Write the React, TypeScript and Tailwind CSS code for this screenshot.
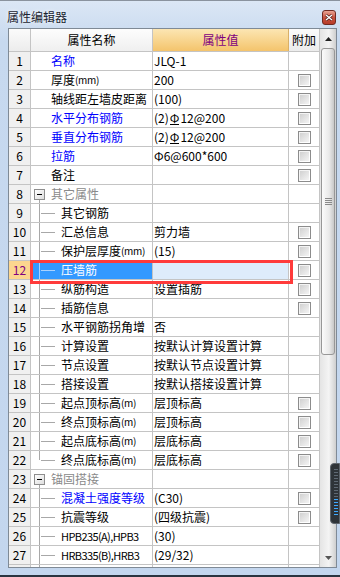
import React from "react";
import clsx from "clsx";

type Row = {
  n: number;
  name: string;
  value?: React.ReactNode;
  color?: "blue" | "gray";
  kind: "top" | "group" | "child";
  check?: boolean;
  sel?: boolean;
  last?: boolean;
};

const Bar = () => (
  <span className="inline-block border-b border-black leading-[12px] mx-[1px]">Φ</span>
);

const rows: Row[] = [
  { n: 1, name: "名称", value: "JLQ-1", color: "blue", kind: "top" },
  { n: 2, name: "厚度(mm)", value: "200", kind: "top", check: true },
  { n: 3, name: "轴线距左墙皮距离", value: "(100)", kind: "top", check: true },
  { n: 4, name: "水平分布钢筋", value: <>(2)<Bar />12@200</>, color: "blue", kind: "top", check: true },
  { n: 5, name: "垂直分布钢筋", value: <>(2)<Bar />12@200</>, color: "blue", kind: "top", check: true },
  { n: 6, name: "拉筋", value: "Φ6@600*600", color: "blue", kind: "top", check: true },
  { n: 7, name: "备注", value: "", kind: "top", check: true },
  { n: 8, name: "其它属性", color: "gray", kind: "group" },
  { n: 9, name: "其它钢筋", kind: "child" },
  { n: 10, name: "汇总信息", value: "剪力墙", kind: "child", check: true },
  { n: 11, name: "保护层厚度(mm)", value: "(15)", kind: "child", check: true },
  { n: 12, name: "压墙筋", value: "", kind: "child", check: true, sel: true },
  { n: 13, name: "纵筋构造", value: "设置插筋", kind: "child", check: true },
  { n: 14, name: "插筋信息", value: "", kind: "child", check: true },
  { n: 15, name: "水平钢筋拐角增", value: "否", kind: "child" },
  { n: 16, name: "计算设置", value: "按默认计算设置计算", kind: "child" },
  { n: 17, name: "节点设置", value: "按默认节点设置计算", kind: "child" },
  { n: 18, name: "搭接设置", value: "按默认搭接设置计算", kind: "child" },
  { n: 19, name: "起点顶标高(m)", value: "层顶标高", kind: "child", check: true },
  { n: 20, name: "终点顶标高(m)", value: "层顶标高", kind: "child", check: true },
  { n: 21, name: "起点底标高(m)", value: "层底标高", kind: "child", check: true },
  { n: 22, name: "终点底标高(m)", value: "层底标高", kind: "child", check: true, last: true },
  { n: 23, name: "锚固搭接", color: "gray", kind: "group" },
  { n: 24, name: "混凝土强度等级", value: "(C30)", color: "blue", kind: "child", check: true },
  { n: 25, name: "抗震等级", value: "(四级抗震)", kind: "child", check: true },
  { n: 26, name: "HPB235(A),HPB3", value: "(30)", kind: "child" },
  { n: 27, name: "HRB335(B),HRB3", value: "(29/32)", kind: "child" },
];

// unit suffixes and latin names are drawn narrower, like the bitmap font in the original
function Label({ text }: { text: string }) {
  const unit = text.match(/^(.*)(\(m+\))$/);
  if (unit)
    return (
      <>
        {unit[1]}
        <span className="text-[10px] tracking-[-0.3px]">{unit[2]}</span>
      </>
    );
  if (/^[A-Z]/.test(text)) return <span className="text-[11px] tracking-[-0.6px]">{text}</span>;
  return <>{text}</>;
}

function Check() {
  return (
    <div className="w-[13px] h-[13px] border border-[#8c8c8c] bg-[linear-gradient(135deg,#cdcdcd,#f8f8f8)] shadow-[inset_1px_1px_0_#f4f4f4,inset_-1px_-1px_0_#ffffff]" />
  );
}

function NameCell({ r }: { r: Row }) {
  const line = r.sel ? "bg-[#a9d2ff]" : "bg-[#a8a8a8]";
  return (
    <div
      className={clsx(
        "relative w-[122px] shrink-0 border-r border-[#c4c4c4] flex items-center overflow-hidden whitespace-nowrap",
        r.sel && "bg-[#3399ff] text-white",
        r.kind === "top" || r.kind === "group" ? "pl-[20px]" : "pl-[30px]",
        !r.sel && r.color === "blue" && "text-[#0000ff]",
        !r.sel && r.color === "gray" && "text-[#8a8a8a]"
      )}
    >
      {r.kind === "child" && (
        <>
          <div className={clsx("absolute left-[8px] top-0 w-px", line, r.last ? "h-[9px]" : "h-full")} />
          <div className={clsx("absolute left-[10px] top-[9px] h-px w-[14px]", line)} />
        </>
      )}
      {r.kind === "group" && (
        <>
          <div className="absolute left-[3px] top-[4px] w-[11px] h-[11px] border border-[#8e8e8e] bg-[linear-gradient(135deg,#ffffff,#dedede)] flex items-center justify-center">
            <div className="w-[5px] h-px bg-black" />
          </div>
          <div className={clsx("absolute left-[8px] top-[15px] w-px h-[4px]", line)} />
        </>
      )}
      <Label text={r.name} />
    </div>
  );
}

function TableRow({ r }: { r: Row }) {
  return (
    <div className="flex h-[19px] shrink-0 border-b border-[#c4c4c4]">
      <div
        className={clsx(
          "w-[22px] shrink-0 border-r border-[#c4c4c4] flex items-center justify-center",
          r.sel ? "bg-[#fcd68f] text-[#800080]" : "bg-[#f0f0f0]"
        )}
      >
        {r.n}
      </div>
      <NameCell r={r} />
      <div
        className={clsx(
          "w-[136px] shrink-0 border-r border-[#c4c4c4] flex items-center pl-[1px] whitespace-nowrap overflow-hidden",
          r.sel && "bg-[#deecfb]"
        )}
      >
        {r.value}
      </div>
      <div className="w-[30px] shrink-0 flex items-center justify-center">{r.check && <Check />}</div>
    </div>
  );
}

function Scrollbar() {
  return (
    <div className="w-[17px] shrink-0 flex flex-col border-l border-[#c4c4c4] bg-[linear-gradient(to_right,#e4e4e4,#f4f4f4_55%,#cfcfcf)]">
      <div className="h-[19px] shrink-0 flex items-center justify-center">
        <svg width="7" height="4" viewBox="0 0 7 4">
          <path d="M0 4 L3.5 0 L7 4 Z" fill="#222" />
        </svg>
      </div>
      <div className="flex-1 flex flex-col">
        <div className="h-[307px] mx-[1px] rounded-[3px] border border-[#979797] bg-[linear-gradient(to_right,#fbfbfb,#e9e9e9_60%,#c8c8c8)] flex flex-col items-center justify-center gap-[1px]">
          <div className="w-[7px] h-px bg-[#8a8a8a]" />
          <div className="w-[7px] h-px bg-[#8a8a8a]" />
          <div className="w-[7px] h-px bg-[#8a8a8a]" />
          <div className="w-[7px] h-px bg-[#8a8a8a]" />
        </div>
      </div>
      <div className="h-[19px] shrink-0 flex items-center justify-center">
        <svg width="7" height="4" viewBox="0 0 7 4">
          <path d="M0 0 L3.5 4 L7 0 Z" fill="#555" />
        </svg>
      </div>
    </div>
  );
}

export default function App() {
  return (
    <div className="relative w-[340px] h-[577px] flex flex-col overflow-hidden bg-[linear-gradient(to_bottom,#dbe7f5,#c7d9ef_40px,#c3d6ee)] border-t border-[#8a939e] border-b-2 border-b-[#2a3440] font-['Noto_Sans_CJK_SC',sans-serif] text-[12px] leading-[16px] text-black">
      {/* title bar */}
      <div className="h-[27px] shrink-0 flex justify-between items-start pl-[7px] pr-[4px] pt-[8px]">
        <span className="text-[#1b2430] [text-shadow:0_0_4px_#ffffff]">属性编辑器</span>
        <div className="mt-[1px] w-[14px] h-[15px] rounded-[3px] border border-[#6f2a22] bg-[linear-gradient(to_bottom,#e9a595,#c9533f_50%,#b63b2a)] flex items-center justify-center">
          <svg width="8" height="7" viewBox="0 0 8 7">
            <path d="M1 1 L7 6 M7 1 L1 6" stroke="#3a1210" strokeWidth="2.6" />
            <path d="M1 1 L7 6 M7 1 L1 6" stroke="#ffffff" strokeWidth="1.5" />
          </svg>
        </div>
      </div>

      {/* grid */}
      <div className="ml-[8px] mr-[3px] h-[540px] shrink-0 border border-[#7f8a96] bg-white flex">
        <div className="w-[310px] shrink-0 flex flex-col overflow-hidden">
          <div className="flex h-[23px] shrink-0 border-b border-[#c4c4c4]">
            <div className="w-[22px] shrink-0 border-r border-[#c4c4c4] bg-[linear-gradient(to_bottom,#fbfbfb,#ececec)]" />
            <div className="w-[122px] shrink-0 border-r border-[#c4c4c4] bg-[linear-gradient(to_bottom,#fdfdfd,#efefef)] flex items-center justify-center">
              属性名称
            </div>
            <div className="w-[136px] shrink-0 border-r border-[#d9b068] bg-[linear-gradient(to_bottom,#fce6b3,#f4c46c)] flex items-center justify-center text-[#800080]">
              属性值
            </div>
            <div className="w-[30px] shrink-0 bg-[linear-gradient(to_bottom,#fbfbfb,#ececec)] flex items-center justify-center">
              附加
            </div>
          </div>
          {rows.map((r) => (
            <TableRow key={r.n} r={r} />
          ))}
          {/* next row, scrolled almost out of view */}
          <div className="flex h-[19px] shrink-0">
            <div className="w-[22px] shrink-0 border-r border-[#c4c4c4] bg-[#f0f0f0]" />
            <div className="relative w-[122px] shrink-0 border-r border-[#c4c4c4]">
              <div className="absolute left-[8px] top-0 w-px h-full bg-[#a8a8a8]" />
            </div>
            <div className="w-[136px] shrink-0 border-r border-[#c4c4c4]" />
          </div>
        </div>
        <Scrollbar />
      </div>

      {/* selection annotation */}
      <div className="absolute left-[30px] top-[259px] w-[263px] h-[24px] border-[3px] border-[#ff3b3b]" />

      {/* floating side widget */}
      <div className="absolute right-0 top-[462px] w-[10px] h-[61px] rounded-l-[4px] bg-[#2e3338] border border-[#5d646c] flex flex-col items-start pl-[3px] pt-[5px]">
        <div className="w-[4px] h-[30px] bg-[repeating-linear-gradient(to_bottom,#5e6873_0_1px,transparent_1px_3px)]" />
        <div className="w-[4px] h-[18px] bg-[repeating-linear-gradient(to_bottom,#3fa9ff_0_1px,transparent_1px_3px)]" />
      </div>
    </div>
  );
}
